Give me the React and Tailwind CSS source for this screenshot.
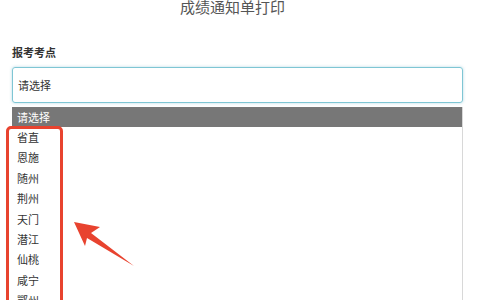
import React from 'react'

const options = ['省直', '恩施', '随州', '荆州', '天门', '潜江', '仙桃', '咸宁', '鄂州', '黄石']

export default function App() {
    return (
        <div className="relative w-[480px] h-[300px] overflow-hidden bg-white" style={{ fontFamily: '"Noto Sans CJK SC", "Liberation Sans", sans-serif' }}>
            {/* Title */}
            <div className="flex justify-center pr-[15px] mt-[-2px]">
                <p className="text-[15px] leading-[18px] text-[#555]">成绩通知单打印</p>
            </div>

            <div className="px-[12px] pr-[17px] pt-[29px]">
                <p className="text-[11px] leading-[14px] font-bold text-[#333]">报考考点</p>

                <div className="mt-[8px] h-[36px] flex items-center px-[5px] border border-[#7fc6d4] rounded-[3px] shadow-[0_0_3px_rgba(102,175,200,0.5)]">
                    <span className="text-[11px] text-[#333]">请选择</span>
                </div>

                <div className="mt-[4px] border-r border-[#d8d8d8]">
                    <div className="h-[20px] flex items-center px-[5px] bg-[#777] text-white text-[11px]">请选择</div>
                    {options.map(o => (
                        <div key={o} className="h-[20.4px] flex items-center px-[5px] text-[11px] text-[#333]">{o}</div>
                    ))}
                </div>
            </div>

            {/* red highlight box */}
            <div className="absolute left-[6px] top-[126px] w-[57px] h-[190px] border-[3px] border-[#e8432f] rounded-[5px]" />

            {/* arrow */}
            <svg className="absolute left-0 top-0" width="480" height="300" viewBox="0 0 480 300">
                <polygon points="74,222 100,227 91,233 134,266 87,238 85,246" fill="#e8432f" />
            </svg>
        </div>
    )
}
